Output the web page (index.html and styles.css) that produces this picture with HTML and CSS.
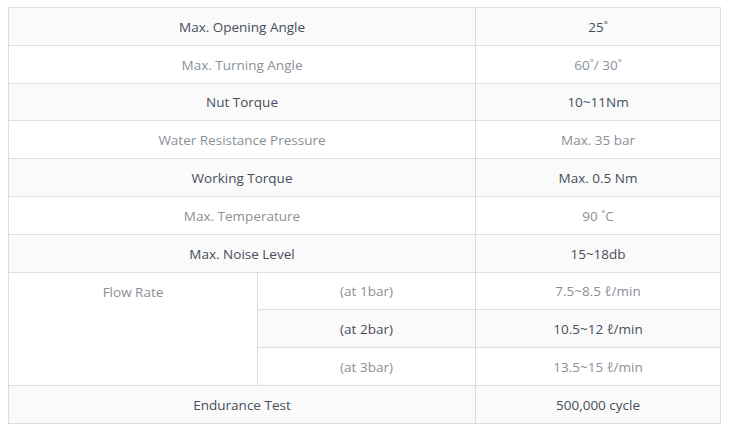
FILE: index.html
```html
<!DOCTYPE html>
<html>
<head>
<meta charset="utf-8">
<link rel="stylesheet" href="styles.css">
</head>
<body>
<table class="spec">
  <colgroup>
    <col class="c1">
    <col class="c2">
    <col class="c3">
  </colgroup>
  <tbody>
    <tr class="shade"><td colspan="2">Max. Opening Angle</td><td>25˚</td></tr>
    <tr><td colspan="2">Max. Turning Angle</td><td>60˚/ 30˚</td></tr>
    <tr class="shade"><td colspan="2">Nut Torque</td><td>10~11Nm</td></tr>
    <tr><td colspan="2">Water Resistance Pressure</td><td>Max. 35 bar</td></tr>
    <tr class="shade"><td colspan="2">Working Torque</td><td>Max. 0.5 Nm</td></tr>
    <tr><td colspan="2">Max. Temperature</td><td>90 ˚C</td></tr>
    <tr class="shade"><td colspan="2">Max. Noise Level</td><td>15~18db</td></tr>
    <tr><td rowspan="3" class="top">Flow Rate</td><td>(at 1bar)</td><td>7.5~8.5 ℓ/min</td></tr>
    <tr class="shade"><td>(at 2bar)</td><td>10.5~12 ℓ/min</td></tr>
    <tr><td>(at 3bar)</td><td>13.5~15 ℓ/min</td></tr>
    <tr class="shade"><td colspan="2">Endurance Test</td><td>500,000 cycle</td></tr>
  </tbody>
</table>
</body>
</html>
```

FILE: styles.css
```css
body {
  margin: 7px 8px;
  background: #ffffff;
  font-family: "Open Sans", "Liberation Sans", sans-serif;
  font-size: 13.5px;
}
.spec {
  border-collapse: collapse;
  table-layout: fixed;
  width: 712px;
}
.c1 { width: 249px; }
.c2 { width: 218px; }
.c3 { width: 245px; }
.spec tr { height: 37.8px; }
.spec td {
  border: 1px solid #dddddd;
  text-align: center;
  vertical-align: middle;
  padding: 1px 4px 0;
  line-height: 18px;
  color: #8b9097;
  background: #ffffff;
}
.spec tr.shade td {
  background: #fafafa;
  color: #474e5b;
}
.spec td.top {
  vertical-align: top;
  padding-top: 10px;
}
```
